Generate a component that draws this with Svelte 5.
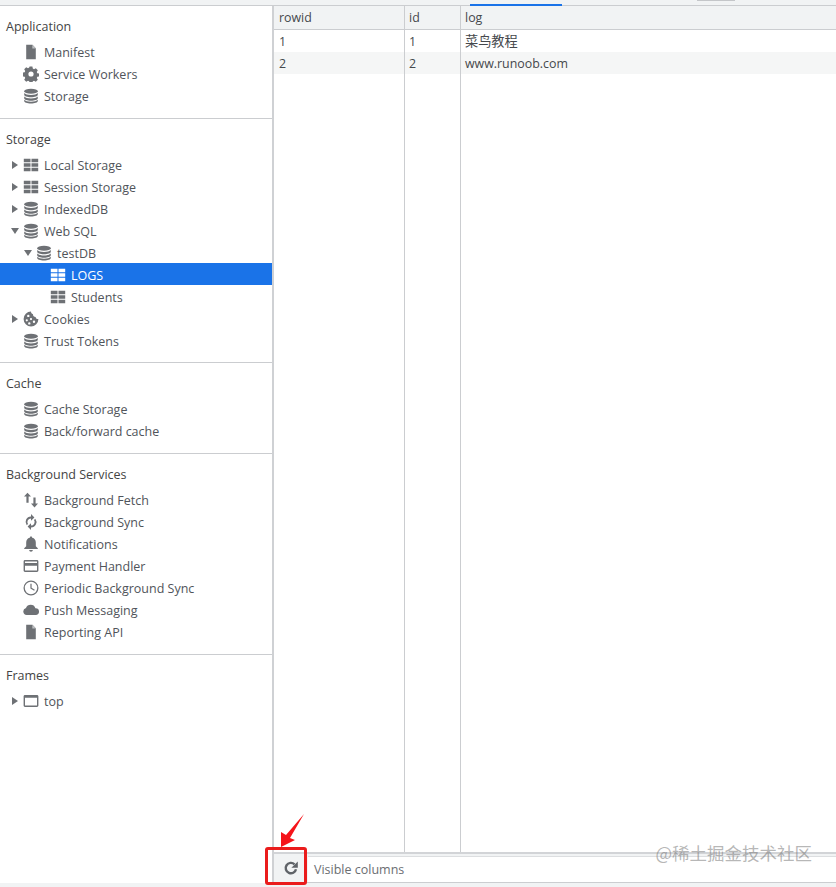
<script>
  const sections = [
    { title: 'Application', items: [
      { label: 'Manifest', icon: 'file' },
      { label: 'Service Workers', icon: 'gear' },
      { label: 'Storage', icon: 'db' }
    ]},
    { title: 'Storage', items: [
      { label: 'Local Storage', icon: 'table', arrow: 'right' },
      { label: 'Session Storage', icon: 'table', arrow: 'right' },
      { label: 'IndexedDB', icon: 'db', arrow: 'right' },
      { label: 'Web SQL', icon: 'db', arrow: 'down' },
      { label: 'testDB', icon: 'db', arrow: 'down', depth: 1 },
      { label: 'LOGS', icon: 'table', depth: 2, selected: true },
      { label: 'Students', icon: 'table', depth: 2 },
      { label: 'Cookies', icon: 'cookie', arrow: 'right' },
      { label: 'Trust Tokens', icon: 'db' }
    ]},
    { title: 'Cache', items: [
      { label: 'Cache Storage', icon: 'db' },
      { label: 'Back/forward cache', icon: 'db' }
    ]},
    { title: 'Background Services', items: [
      { label: 'Background Fetch', icon: 'updown' },
      { label: 'Background Sync', icon: 'sync' },
      { label: 'Notifications', icon: 'bell' },
      { label: 'Payment Handler', icon: 'card' },
      { label: 'Periodic Background Sync', icon: 'clock' },
      { label: 'Push Messaging', icon: 'cloud' },
      { label: 'Reporting API', icon: 'file' }
    ]},
    { title: 'Frames', items: [
      { label: 'top', icon: 'frame', arrow: 'right' }
    ]}
  ];

  const rows = [
    { rowid: 1, id: 1, log: '菜鸟教程', cjk: true },
    { rowid: 2, id: 2, log: 'www.runoob.com' }
  ];
</script>

{#snippet icon(name)}
  <svg class="icon" viewBox="0 0 16 16" fill="currentColor">
    {#if name === 'file'}
      <path d="M3.2 0.800h6.300l3.300 3.400v11H3.200z" />
      <path d="M9.300 0.800v3.600h3.500" fill="#fff" opacity=".55" />
    {:else if name === 'gear'}
      <path fill-rule="evenodd" d="M6.600.6h2.800l.4 2 1.200.6 1.800-1 2 2-1 1.800.5 1.200 2 .4v2.800l-2 .4-.5 1.200 1 1.800-2 2-1.800-1-1.200.5-.4 2H6.600l-.4-2-1.200-.5-1.800 1-2-2 1-1.800-.5-1.200-2-.4V6.600l2-.4.5-1.200-1-1.800 2-2 1.800 1 1.200-.6zM8 5.400a2.600 2.600 0 1 0 0 5.200 2.600 2.600 0 0 0 0-5.200z" />
    {:else if name === 'db'}
      <ellipse cx="8" cy="3.200" rx="6.800" ry="2.500" />
      <path d="M1.200 5v1.700c0 1.400 3 2.500 6.800 2.500s6.800-1.100 6.800-2.500V5c-1 1.300-3.600 2-6.800 2S2.200 6.300 1.200 5z" />
      <path d="M1.200 8.500v1.700c0 1.400 3 2.500 6.800 2.500s6.800-1.100 6.800-2.500V8.500c-1 1.300-3.600 2-6.800 2s-5.800-.7-6.800-2z" />
      <path d="M1.200 11.800v1.200c0 1.400 3 2.500 6.800 2.500s6.800-1.100 6.800-2.500v-1.200c-1 1.300-3.600 2-6.800 2s-5.800-.7-6.800-2z" />
    {:else if name === 'table'}
      <path d="M.8 1.800h6.700v3.500H.8zM8.500 1.800h6.700v3.500H8.500zM.8 6.300h6.700v3.400H.8zM8.500 6.300h6.700v3.400H8.500zM.8 10.700h6.700v3.500H.8zM8.500 10.700h6.700v3.500H8.500z" />
    {:else if name === 'cookie'}
      <path fill-rule="evenodd" d="M8 .6a7.400 7.400 0 1 0 7.400 7.400c-1.600.3-2.600-.6-2.800-2-1.500 0-2.700-1-2.600-2.700C8.700 3 8 2 8 .6zM5.300 3.700a1.200 1.200 0 1 1 0 2.400 1.200 1.200 0 0 1 0-2.400zM3.800 8.200a1.100 1.100 0 1 1 0 2.200 1.100 1.100 0 0 1 0-2.200zM8 7a1.100 1.100 0 1 1 0 2.200A1.100 1.100 0 0 1 8 7zm3 2.600a1.200 1.200 0 1 1 0 2.400 1.200 1.200 0 0 1 0-2.400zm-4.700 1.600a1.200 1.200 0 1 1 0 2.400 1.200 1.200 0 0 1 0-2.400z" />
    {:else if name === 'updown'}
      <path d="M4.500.8 8 4.600H5.600v6.200H3.400V4.600H1zM10.400 5.400h2.200v6.200H15l-3.500 3.800L8 11.600h2.400z" />
    {:else if name === 'sync'}
      <path d="M8 2.600V0l3.400 3.400L8 6.800V4.400a3.600 3.600 0 0 0-3 5.600l-1.300 1.300A5.400 5.400 0 0 1 8 2.600zM12.300 4.700A5.400 5.400 0 0 1 8 13.400V16l-3.400-3.400L8 9.200v2.400a3.600 3.600 0 0 0 3-5.600z" />
    {:else if name === 'bell'}
      <path d="M8 .4c.8 0 1.200.5 1.200 1.300 2.400.5 3.600 2.400 3.600 4.800v3.800l2 1.900v.8H1.200v-.8l2-1.900V6.500c0-2.400 1.200-4.300 3.600-4.800C6.800.9 7.200.4 8 .4zM6.200 14h3.600c0 1-.8 1.700-1.800 1.700S6.200 15 6.200 14z" />
    {:else if name === 'card'}
      <path fill-rule="evenodd" d="M2 2h12c.8 0 1.400.6 1.400 1.400v9.200c0 .8-.6 1.400-1.400 1.400H2c-.8 0-1.400-.6-1.400-1.400V3.400C.6 2.600 1.200 2 2 2zm0 1.400V5h12V3.400zm0 4.400v4.800h12V7.800z" />
    {:else if name === 'clock'}
      <path fill-rule="evenodd" d="M8 .5a7.500 7.500 0 1 1 0 15 7.500 7.500 0 0 1 0-15zm0 1.300a6.200 6.200 0 1 0 0 12.400A6.200 6.200 0 0 0 8 1.800z" />
      <path d="M7.400 3.800h1.200v4l3.200 1.900-.6 1-3.800-2.300z" />
    {:else if name === 'cloud'}
      <path d="M3.600 13A3.500 3.500 0 0 1 3 6.100 5 5 0 0 1 12.400 6.200 3.400 3.400 0 0 1 12.800 13z" />
    {:else if name === 'frame'}
      <path fill-rule="evenodd" d="M2 2h12c.8 0 1.400.6 1.400 1.400v9.200c0 .8-.6 1.400-1.400 1.400H2c-.8 0-1.400-.6-1.400-1.400V3.400C.6 2.600 1.200 2 2 2zm0 2.800v7.800h12V4.800z" />
    {/if}
  </svg>
{/snippet}

<div class="page">
  <div class="tabstrip">
    <span class="active-tab"></span>
    <span class="other-tab"></span>
  </div>

  <div class="panes">
    <aside class="sidebar">
      {#each sections as section}
        <section class="group">
          <h3>{section.title}</h3>
          <ul>
            {#each section.items as item}
              <li class="row depth{item.depth ?? 0}" class:selected={item.selected}>
                {#if item.arrow}
                  <span class="arrow {item.arrow}"></span>
                {:else}
                  <span class="arrow-gap"></span>
                {/if}
                {@render icon(item.icon)}
                <span class="label">{item.label}</span>
              </li>
            {/each}
          </ul>
        </section>
      {/each}
    </aside>

    <main class="content">
      <div class="grid">
        <div class="grid-row header">
          <div class="cell c1">rowid</div>
          <div class="cell c2">id</div>
          <div class="cell c3">log</div>
        </div>
        {#each rows as row, i}
          <div class="grid-row" class:odd={i % 2 === 1}>
            <div class="cell c1">{row.rowid}</div>
            <div class="cell c2">{row.id}</div>
            <div class="cell c3" class:cjk={row.cjk}>{row.log}</div>
          </div>
        {/each}
        <div class="grid-row filler">
          <div class="cell c1"></div>
          <div class="cell c2"></div>
          <div class="cell c3"></div>
        </div>
      </div>

      <div class="toolbar">
        <button class="refresh" aria-label="Refresh">
          <svg viewBox="0 0 16 16" width="16" height="16">
            <path d="M13 9.200A5.200 5.200 0 1 1 11.500 4.300" fill="none" stroke="#5f6368" stroke-width="2.400" />
            <path d="M14.800 1.400V7.800H8.400z" fill="#5f6368" />
          </svg>
        </button>
        <div class="filter">Visible columns</div>
      </div>
    </main>
  </div>
  <div class="statusline"></div>

  <svg class="annotation" viewBox="0 0 60 50" width="60" height="50">
    <path d="M38 14 24 38 29 40 15 47 15 32 20 35z" fill="#f5141a" />
  </svg>
  <div class="callout"></div>
  <div class="watermark">@稀土掘金技术社区</div>
</div>

<style>
  :global(body) {
    margin: 0;
    background: #fff;
  }

  .page {
    position: relative;
    width: 836px;
    height: 887px;
    display: flex;
    flex-direction: column;
    overflow: hidden;
    font-family: "Open Sans", "Noto Sans CJK SC", sans-serif;
    font-size: 12.5px;
    color: #3c4043;
  }

  .tabstrip {
    position: relative;
    height: 5px;
    flex: none;
    background: #f1f3f4;
    border-bottom: 1px solid #cbcdd0;
  }

  .active-tab {
    position: absolute;
    left: 470px;
    top: 4px;
    width: 92px;
    height: 2px;
    background: #1a73e8;
  }

  .other-tab {
    position: absolute;
    left: 697px;
    top: 0;
    width: 38px;
    height: 1px;
    background: #c4c6c9;
  }

  .panes {
    flex: 1;
    display: flex;
    min-height: 0;
  }

  .sidebar {
    width: 272px;
    flex: none;
    border-right: 2px solid #cfd1d4;
  }

  .group {
    padding-bottom: 12px;
    border-bottom: 1px solid #cbcdd0;
  }

  .group:nth-child(2) {
    padding-bottom: 11px;
  }

  .group:last-child {
    border-bottom: none;
  }

  h3 {
    margin: 0;
    height: 34px;
    padding: 12px 0 0 6px;
    box-sizing: border-box;
    font-size: 12.5px;
    font-weight: 400;
    line-height: 18px;
    color: #444;
  }

  ul {
    list-style: none;
    margin: 0;
    padding: 0;
  }

  .row {
    height: 22px;
    box-sizing: border-box;
    display: flex;
    align-items: center;
    padding: 2px 0 0 11px;
    color: #50545a;
  }

  .row.depth1 {
    padding-left: 24px;
  }

  .row.depth2 {
    padding-left: 38px;
  }

  .row.selected {
    background: #1a73e8;
    color: #fff;
  }

  .arrow,
  .arrow-gap {
    width: 12px;
    height: 10px;
    flex: none;
    position: relative;
  }

  .arrow::before {
    content: "";
    position: absolute;
    left: 1px;
    top: 1px;
    border-style: solid;
    border-color: transparent;
  }

  .arrow.right::before {
    border-width: 4px 0 4px 6px;
    border-left-color: #6e7175;
  }

  .arrow.down::before {
    left: 0;
    top: 2px;
    border-width: 6px 4px 0 4px;
    border-top-color: #6e7175;
  }

  .icon {
    width: 16px;
    height: 16px;
    flex: none;
    color: #6e7175;
    margin-right: 5px;
  }

  .selected .icon {
    color: #fff;
  }

  .content {
    flex: 1;
    min-width: 0;
    display: flex;
    flex-direction: column;
  }

  .grid {
    flex: 1;
    display: flex;
    flex-direction: column;
    min-height: 0;
  }

  .grid-row {
    height: 22px;
    flex: none;
    display: flex;
    line-height: 24px;
    font-size: 12.4px;
    color: #45484c;
  }

  .grid-row.header {
    height: 24px;
    background: #f1f3f4;
    border-bottom: 1px solid #cbcdd0;
    box-sizing: border-box;
  }

  .grid-row.odd {
    background: #f5f6f6;
  }

  .grid-row.filler {
    flex: 1;
  }

  .cell {
    box-sizing: border-box;
    padding-left: 5px;
    border-right: 1px solid #cbcdd0;
    white-space: nowrap;
  }

  .c1 {
    width: 131px;
  }

  .c2 {
    width: 56px;
    padding-left: 4px;
  }

  .c3 {
    flex: 1;
    padding-left: 4px;
    border-right: none;
  }

  .cjk {
    font-size: 13.200px;
    line-height: 22px;
  }

  .toolbar {
    height: 28px;
    flex: none;
    display: flex;
    background: #f1f3f4;
    border-top: 2px solid #d2d4d7;
    border-bottom: 1px solid #cbcdd0;
  }

  .refresh {
    width: 34px;
    padding: 0;
    border: none;
    background: #f1f3f4;
    display: flex;
    align-items: center;
    justify-content: center;
  }

  .filter {
    flex: 1;
    margin-top: 2px;
    background: #fff;
    border-top: 1px solid #dcdee0;
    padding-left: 6px;
    line-height: 25px;
    color: #6b6e72;
  }

  .statusline {
    height: 4px;
    flex: none;
    background: #f1f3f4;
  }

  .annotation {
    position: absolute;
    left: 266px;
    top: 800px;
  }

  .callout {
    position: absolute;
    left: 265px;
    top: 847px;
    width: 42px;
    height: 38px;
    box-sizing: border-box;
    border: 3px solid #ea1c1c;
    border-radius: 3px;
  }

  .watermark {
    position: absolute;
    right: 24px;
    top: 841px;
    font-size: 17.500px;
    line-height: 24px;
    font-family: "Noto Sans CJK SC", sans-serif;
    color: rgba(120, 120, 120, 0.55);
  }
</style>
